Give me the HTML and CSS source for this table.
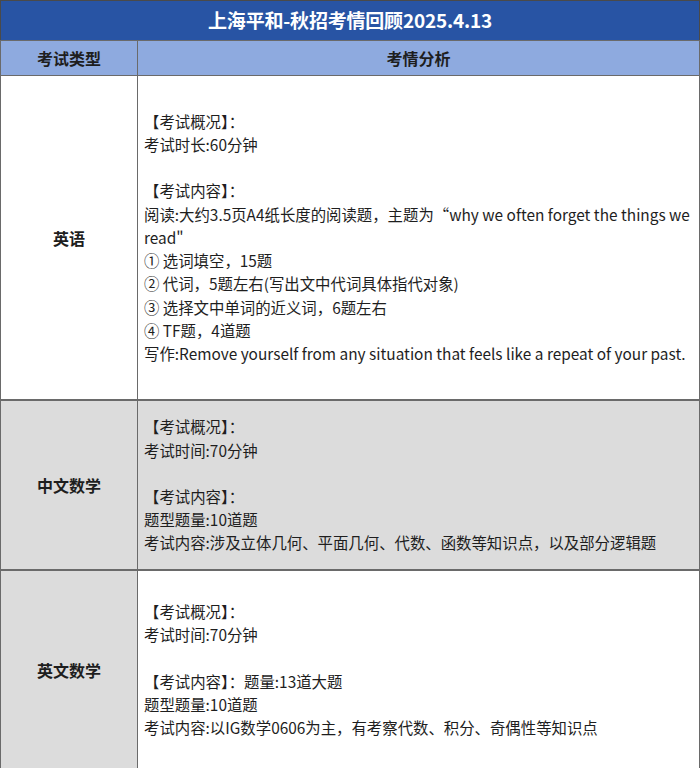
FILE: index.html
```html
<!DOCTYPE html>
<html lang="zh">
<head>
<meta charset="utf-8">
<link rel="stylesheet" href="styles.css">
</head>
<body>
<div class="sheet">
  <div class="title">上海平和-秋招考情回顾2025.4.13</div>
  <table class="grid">
    <colgroup><col class="c1"><col class="c2"></colgroup>
    <tr class="head">
      <th>考试类型</th>
      <th>考情分析</th>
    </tr>
    <tr class="r1">
      <td class="label">英语</td>
      <td class="content">【考试概况】：<br>考试时长:60分钟<br>&nbsp;<br>【考试内容】：<br>阅读:大约3.5页A4纸长度的阅读题，主题为“why we often forget the things we<br>read"<br>① 选词填空，15题<br>② 代词，5题左右(写出文中代词具体指代对象)<br>③ 选择文中单词的近义词，6题左右<br>④ TF题，4道题<br>写作:Remove yourself from any situation that feels like a repeat of your past.</td>
    </tr>
    <tr class="r2">
      <td class="label">中文数学</td>
      <td class="content">【考试概况】：<br>考试时间:70分钟<br>&nbsp;<br>【考试内容】：<br>题型题量:10道题<br>考试内容:涉及立体几何、平面几何、代数、函数等知识点，以及部分逻辑题</td>
    </tr>
    <tr class="r3">
      <td class="label">英文数学</td>
      <td class="content">【考试概况】：<br>考试时间:70分钟<br>&nbsp;<br>【考试内容】：题量:13道大题<br>题型题量:10道题<br>考试内容:以IG数学0606为主，有考察代数、积分、奇偶性等知识点</td>
    </tr>
  </table>
</div>
</body>
</html>
```
FILE: styles.css
```css
html, body {
  margin: 0;
  padding: 0;
  background: #ffffff;
}
body {
  font-family: "Noto Sans CJK SC", "Noto Sans", sans-serif;
  color: #1e1e1e;
}
.sheet {
  width: 700px;
}
.title {
  box-sizing: border-box;
  height: 40px;
  background: #2854a4;
  color: #ffffff;
  font-size: 19px;
  font-weight: bold;
  text-align: center;
  line-height: 38px;
  border: 1px solid #4a4a4a;
  border-bottom: none;
  letter-spacing: -0.2px;
}
.grid {
  width: 700px;
  border-collapse: collapse;
  table-layout: fixed;
}
.c1 { width: 137px; }
.grid th, .grid td {
  border: 1px solid #6a6a6a;
  padding: 0;
}
.head th {
  height: 34px;
  background: #8eaadf;
  font-size: 16px;
  font-weight: bold;
  color: #1e1e1e;
  text-align: center;
  vertical-align: middle;
}
.label {
  text-align: center;
  vertical-align: middle;
  font-size: 16px;
  font-weight: bold;
}
.content {
  font-size: 15.4px;
  line-height: 23.2px;
  padding: 0 0 0 6px !important;
  vertical-align: middle;
  white-space: nowrap;
}
.r1 td {
  height: 323px;
  background: #ffffff;
  border-bottom: 2px solid #6a6a6a;
}
.r2 td {
  height: 168px;
  background: #dcdcdc;
  border-bottom: 2px solid #6a6a6a;
}
.r3 td {
  height: 197px;
  background: #ffffff;
}
.r3 td.label {
  background: #dcdcdc;
}
```
